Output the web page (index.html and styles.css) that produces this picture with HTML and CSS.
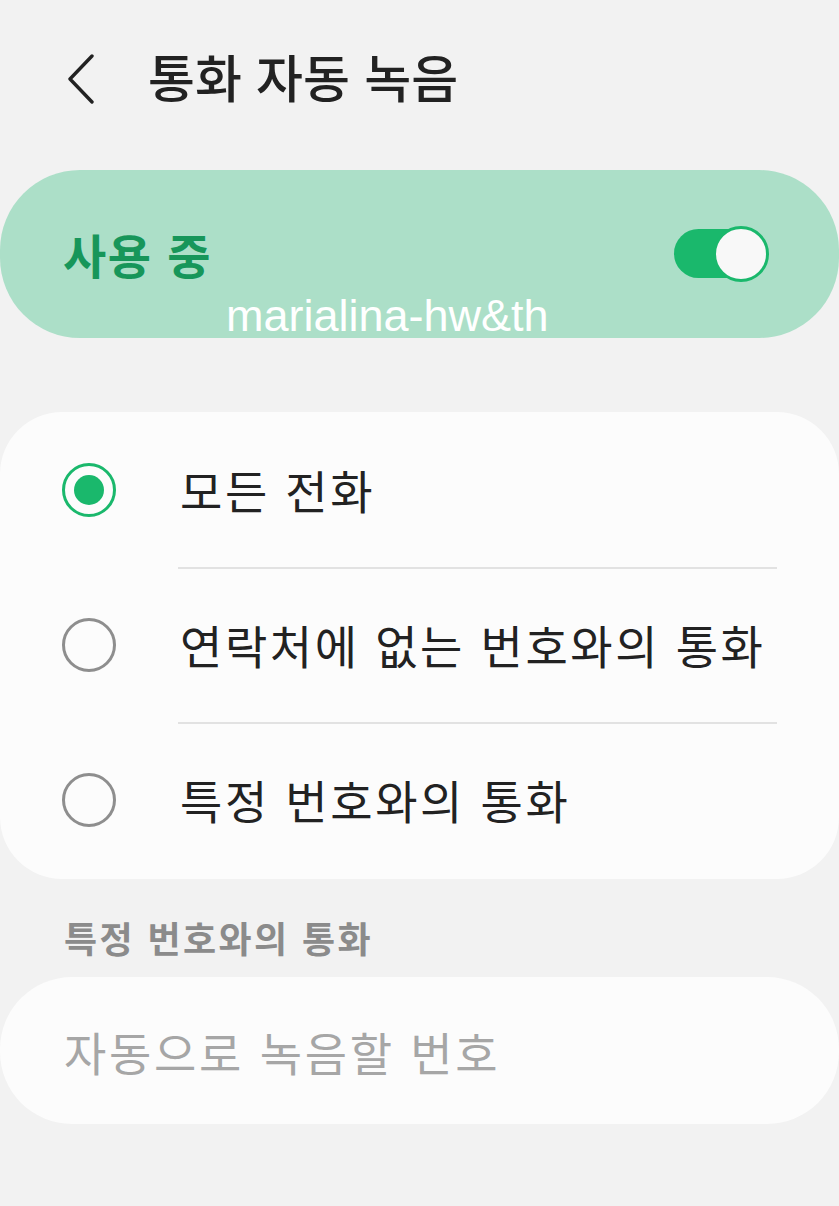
FILE: index.html
```html
<!DOCTYPE html>
<html lang="ko">

<head>
    <meta charset="UTF-8">
    <meta name="viewport" content="width=device-width, initial-scale=1.0">
    <title>통화 자동 녹음</title>

    <!-- CSS Styles -->
    <link rel="stylesheet" href="styles.css">
</head>

<body>
    <header class="top-bar">
        <span class="back-btn">
            <svg width="36" height="56" viewBox="0 0 36 56">
                <polyline points="28,8 6,31 28,54" fill="none" stroke="#222" stroke-width="3.4" stroke-linecap="round" stroke-linejoin="round" />
            </svg>
        </span>
        <h1 class="page-title">통화 자동 녹음</h1>
    </header>

    <!-- Master switch -->
    <section class="master-card">
        <span class="master-label">사용 중</span>
        <span class="switch">
            <span class="switch-track"></span>
            <span class="switch-thumb"></span>
        </span>
        <span class="watermark">marialina-hw&amp;th</span>
    </section>

    <!-- Which calls to record -->
    <section class="option-card">
        <div class="option-row">
            <span class="radio checked"></span>
            <span class="option-text">모든 전화</span>
        </div>
        <div class="option-row divided">
            <span class="radio"></span>
            <span class="option-text">연락처에 없는 번호와의 통화</span>
        </div>
        <div class="option-row divided">
            <span class="radio"></span>
            <span class="option-text">특정 번호와의 통화</span>
        </div>
    </section>

    <h2 class="section-label">특정 번호와의 통화</h2>

    <section class="input-card">
        <span class="placeholder">자동으로 녹음할 번호</span>
    </section>
</body>

</html>
```

FILE: styles.css
```css
/* Colours used on the screen */
:root {
    --bg-color: #f2f2f2;
    --card-color: #fcfcfc;
    --green-card: #acdfc8;
    --green: #1ab86c;
    --green-text: #17965a;
    --text-color: #222222;
    --muted-color: #8b8b8b;
    --hint-color: #a6a6a6;
    --line-color: #e2e2e2;
}

body {
    background: var(--bg-color);
    color: var(--text-color);
    font-family: "Noto Sans CJK KR", "Noto Sans", sans-serif;
    margin: 0;
    padding: 0;
}

/* Header */
.top-bar {
    display: flex;
    align-items: center;
    height: 156px;
    padding-left: 64px;
    box-sizing: border-box;
}

.back-btn {
    display: flex;
    width: 36px;
    height: 56px;
    margin-top: -4px;
}

.page-title {
    margin: -4px 0 0 48px;
    font-size: 51px;
    font-weight: 500;
    letter-spacing: 0;
}

/* Green master switch card */
.master-card {
    position: relative;
    display: flex;
    align-items: center;
    justify-content: space-between;
    height: 168px;
    margin-top: 14px;
    padding: 0 70px 0 63px;
    background: var(--green-card);
    border-radius: 80px;
}

.master-label {
    color: var(--green-text);
    font-size: 47px;
    font-weight: 700;
    letter-spacing: 1.5px;
    margin-top: -2px;
}

.switch {
    position: relative;
    width: 96px;
    height: 56px;
}

.switch-track {
    position: absolute;
    left: 1px;
    top: 3px;
    width: 80px;
    height: 49px;
    border-radius: 25px;
    background: var(--green);
}

.switch-thumb {
    position: absolute;
    right: 0;
    top: 0;
    width: 50px;
    height: 50px;
    border-radius: 50%;
    background: #f8f8f8;
    border: 3px solid var(--green);
}

.watermark {
    position: absolute;
    left: 226px;
    bottom: -4px;
    font-family: "Liberation Sans", Arial, sans-serif;
    font-size: 45px;
    color: #ffffff;
    line-height: 1;
    padding-bottom: 4px;
}

/* Radio list */
.option-card {
    margin-top: 74px;
    padding: 0 0 2px;
    background: var(--card-color);
    border-radius: 62px;
}

.option-row {
    position: relative;
    display: flex;
    align-items: center;
    height: 155px;
    padding-left: 62px;
}

.option-row.divided::before {
    content: "";
    position: absolute;
    top: 0;
    left: 178px;
    right: 62px;
    height: 2px;
    background: var(--line-color);
}

.radio {
    width: 48px;
    height: 48px;
    border: 3px solid #8e8e8e;
    border-radius: 50%;
    display: flex;
    align-items: center;
    justify-content: center;
}

.radio.checked {
    border-color: var(--green);
}

.radio.checked::after {
    content: "";
    width: 30px;
    height: 30px;
    border-radius: 50%;
    background: var(--green);
}

.option-text {
    margin-left: 64px;
    font-size: 46px;
    letter-spacing: 2.6px;
    margin-top: -2px;
}

/* Specific numbers */
.section-label {
    margin: 0;
    padding: 40px 0 0 64px;
    height: 68px;
    box-sizing: border-box;
    font-size: 36px;
    font-weight: 700;
    color: var(--muted-color);
    letter-spacing: 2.4px;
    line-height: 1;
}

.input-card {
    display: flex;
    align-items: center;
    height: 147px;
    margin-top: 30px;
    padding-left: 64px;
    background: var(--card-color);
    border-radius: 72px;
}

.placeholder {
    font-size: 46px;
    color: var(--hint-color);
    letter-spacing: 2.7px;
}
```
